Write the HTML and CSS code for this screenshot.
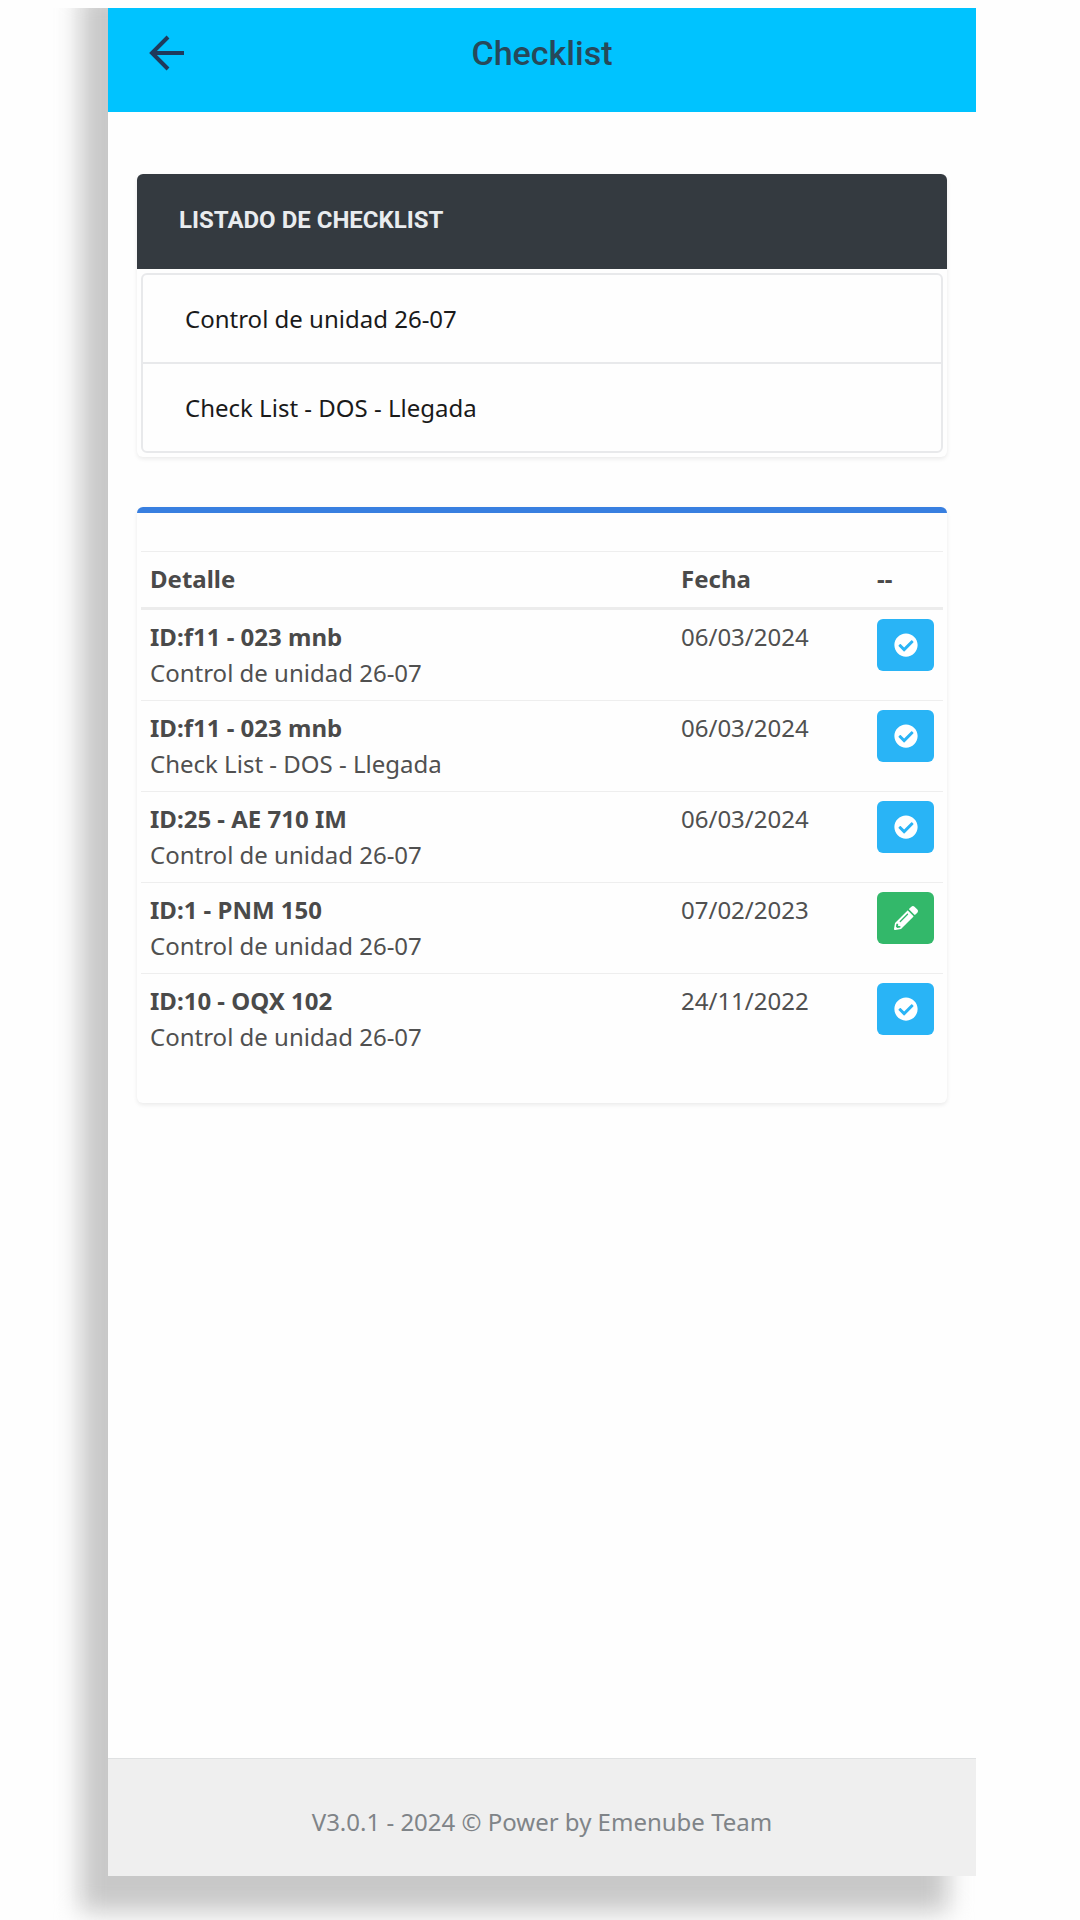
FILE: index.html
```
<!DOCTYPE html>
<html lang="es">
<head>
    <meta charset="UTF-8">
    <meta name="viewport" content="width=device-width, initial-scale=1.0">
    <title>Checklist</title>
    <link rel="stylesheet" href="styles.css">
</head>
<body>
    <!-- Icons -->
    <svg class="icon-defs" aria-hidden="true">
        <symbol id="icon-check" viewBox="0 0 512 512">
            <path d="M504 256c0 136.967-111.033 248-248 248S8 392.967 8 256 119.033 8 256 8s248 111.033 248 248zM227.314 387.314l184-184c6.248-6.248 6.248-16.379 0-22.627l-22.627-22.627c-6.248-6.249-16.379-6.249-22.628 0L216 308.118l-70.059-70.059c-6.248-6.248-16.379-6.248-22.628 0l-22.627 22.627c-6.248 6.248-6.248 16.379 0 22.627l104 104c6.249 6.249 16.379 6.249 22.628.001z"/>
        </symbol>
        <symbol id="icon-pencil" viewBox="0 0 512 512">
            <path d="M497.9 142.1l-46.1 46.1c-4.7 4.7-12.3 4.7-17 0l-111-111c-4.7-4.7-4.7-12.3 0-17l46.1-46.1c18.7-18.7 49.1-18.7 67.9 0l60.1 60.1c18.8 18.7 18.8 49.1 0 67.9zM284.2 99.8L21.6 362.4.4 483.9c-2.9 16.4 11.4 30.6 27.8 27.8l121.5-21.3 262.6-262.6c4.7-4.7 4.7-12.3 0-17l-111-111c-4.8-4.7-12.4-4.7-17.1 0zM124.1 339.9c-5.5-5.5-5.5-14.3 0-19.8l154-154c5.5-5.5 14.3-5.5 19.8 0s5.5 14.3 0 19.8l-154 154c-5.5 5.5-14.3 5.5-19.8 0zM88 424h48v36.3l-64.5 11.3-31.1-31.1L51.7 376H88v48z"/>
        </symbol>
    </svg>

    <div class="screen">
        <header class="header">
            <a href="#" class="back" aria-label="Volver">
                <svg viewBox="0 0 36 36">
                    <path d="M19 2L3 18l16 16M3 18h32"/>
                </svg>
            </a>
            <h1 class="title">Checklist</h1>
        </header>

        <main class="content">
            <section class="card card-list">
                <h2 class="card-header">Listado de Checklist</h2>
                <div class="list-group">
                    <a href="#" class="list-item">Control de unidad 26-07</a>
                    <a href="#" class="list-item">Check List - DOS - Llegada</a>
                </div>
            </section>

            <section class="card card-table">
                <table class="table">
                    <thead>
                        <tr>
                            <th>Detalle</th>
                            <th class="col-date">Fecha</th>
                            <th class="col-action">--</th>
                        </tr>
                    </thead>
                    <tbody>
                        <tr>
                            <td><strong>ID:f11 - 023 mnb</strong><br>Control de unidad 26-07</td>
                            <td>06/03/2024</td>
                            <td><button class="btn btn-info" aria-label="Ver"><svg><use href="#icon-check"/></svg></button></td>
                        </tr>
                        <tr>
                            <td><strong>ID:f11 - 023 mnb</strong><br>Check List - DOS - Llegada</td>
                            <td>06/03/2024</td>
                            <td><button class="btn btn-info" aria-label="Ver"><svg><use href="#icon-check"/></svg></button></td>
                        </tr>
                        <tr>
                            <td><strong>ID:25 - AE 710 IM</strong><br>Control de unidad 26-07</td>
                            <td>06/03/2024</td>
                            <td><button class="btn btn-info" aria-label="Ver"><svg><use href="#icon-check"/></svg></button></td>
                        </tr>
                        <tr>
                            <td><strong>ID:1 - PNM 150</strong><br>Control de unidad 26-07</td>
                            <td>07/02/2023</td>
                            <td><button class="btn btn-success" aria-label="Editar"><svg><use href="#icon-pencil"/></svg></button></td>
                        </tr>
                        <tr>
                            <td><strong>ID:10 - OQX 102</strong><br>Control de unidad 26-07</td>
                            <td>24/11/2022</td>
                            <td><button class="btn btn-info" aria-label="Ver"><svg><use href="#icon-check"/></svg></button></td>
                        </tr>
                    </tbody>
                </table>
            </section>
        </main>

        <footer class="footer">V3.0.1 - 2024 © Power by Emenube Team</footer>
    </div>
</body>
</html>
```
FILE: styles.css
```
* {
    box-sizing: border-box;
}
body {
    margin: 0;
    padding: 8px 104px 44px 108px;
    min-height: 100vh;
    display: flex;
    overflow: hidden;
    background: #fefefe;
    color: #505050;
    font-family: "Noto Sans", sans-serif;
    font-size: 24px;
    line-height: 36px;
}
.icon-defs {
    display: none;
}
.screen {
    position: relative;
    flex: 1;
    display: flex;
    flex-direction: column;
    /* keep the shadow on the left and bottom sides only */
    clip-path: inset(0 0 -100px -100px);
}
.screen::before {
    content: "";
    position: absolute;
    inset: -16px 28px -36px -28px;
    z-index: -1;
    background: #c8c8c8;
    filter: blur(12px);
}
.header {
    display: grid;
    grid-template-columns: 36px 1fr 36px;
    align-items: center;
    height: 104px;
    padding: 2px 41px 16px;
    background: #00c3ff;
}
.back {
    display: flex;
}
.back svg {
    width: 36px;
    height: 36px;
    fill: none;
    stroke: #1f3a5c;
    stroke-width: 4;
}
.title {
    margin: 0;
    text-align: center;
    font-family: Roboto, sans-serif;
    font-size: 34px;
    font-weight: 500;
    color: #27495a;
}
.content {
    flex: 1;
    padding: 62px 29px;
    background: #fefefe;
}
.card {
    margin-bottom: 50px;
    border-radius: 6px;
    box-shadow: 0 2px 4px rgba(0, 0, 0, 0.08);
}
.card-list {
    padding-bottom: 4px;
}
.card-header {
    margin: 0;
    padding: 28px 42px 31px;
    border-radius: 6px 6px 0 0;
    background: #343a40;
    color: #e9ecef;
    font-family: Roboto, sans-serif;
    font-size: 24px;
    font-weight: 700;
    text-transform: uppercase;
}
.list-group {
    margin: 4px 4px 0;
    border: 2px solid #e8e9eb;
    border-radius: 6px;
}
.list-item {
    display: block;
    padding: 26px 42px 25px;
    color: #1a1a1a;
    text-decoration: none;
}
.list-item + .list-item {
    border-top: 2px solid #e8e9eb;
}
.card-table {
    padding: 38px 4px 39px;
    border-top: 6px solid #387fe0;
}
.table {
    width: 100%;
    border-collapse: separate;
    border-spacing: 0;
    table-layout: fixed;
}
.table th,
.table td {
    padding: 9px;
    border-top: 1px solid #eeeeee;
    text-align: left;
    vertical-align: top;
}
.table th {
    padding-bottom: 10px;
    border-bottom: 3px solid #ececec;
    font-weight: 700;
}
.table strong,
.table th {
    color: #4a4a4a;
}
.table tbody tr:first-child td {
    border-top: 0;
}
.col-date {
    width: 196px;
}
.col-action {
    width: 75px;
}
.btn {
    display: flex;
    align-items: center;
    justify-content: center;
    width: 57px;
    height: 52px;
    padding: 0;
    border: 0;
    border-radius: 6px;
    color: #fff;
}
.btn svg {
    width: 24px;
    height: 24px;
    fill: currentColor;
}
.btn-info {
    background: #29b4f6;
}
.btn-success {
    background: #33b86a;
}
.footer {
    padding: 45px 20px 36px;
    border-top: 1px solid #dfe1e2;
    background: #efefef;
    color: #7f8488;
    text-align: center;
}
```
